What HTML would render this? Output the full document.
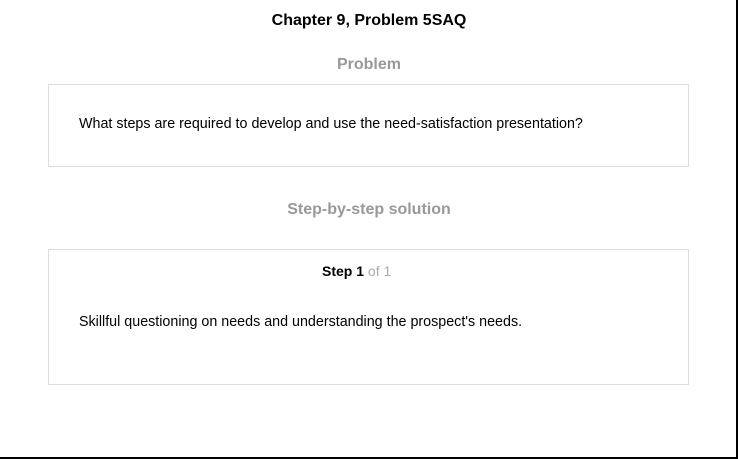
<!DOCTYPE html>
<html><head><style>
html,body{margin:0;padding:0}
body{width:738px;height:459px;position:relative;background:#fff;font-family:"Liberation Sans",Arial,sans-serif;overflow:hidden}
.frame{position:absolute;left:0;top:0;width:736px;height:457px;border-right:2px solid #000;border-bottom:2px solid #000}
.t{position:absolute;left:0;width:738px;text-align:center;font-weight:bold}
.box{position:absolute;left:48px;width:639px;border:1px solid #ddd}
.p{position:absolute;left:79px;font-size:14.3px;color:#000}
</style></head><body>
<div class="frame"></div>
<div class="t" style="top:12px;font-size:16px;color:#000">Chapter 9, Problem 5SAQ</div>
<div class="t" style="top:56px;font-size:16px;color:#999">Problem</div>
<div class="box" style="top:84px;height:81px"></div>
<div class="p" style="top:116px">What steps are required to develop and use the need-satisfaction presentation?</div>
<div class="t" style="top:201px;font-size:16px;color:#999">Step-by-step solution</div>
<div class="box" style="top:249px;height:134px"></div>
<div style="position:absolute;left:322px;top:263px;font-size:14px;font-weight:bold;color:#000">Step 1 <span style="font-weight:normal;color:#aaa">of 1</span></div>
<div class="p" style="top:314px">Skillful questioning on needs and understanding the prospect's needs.</div>
</body></html>
